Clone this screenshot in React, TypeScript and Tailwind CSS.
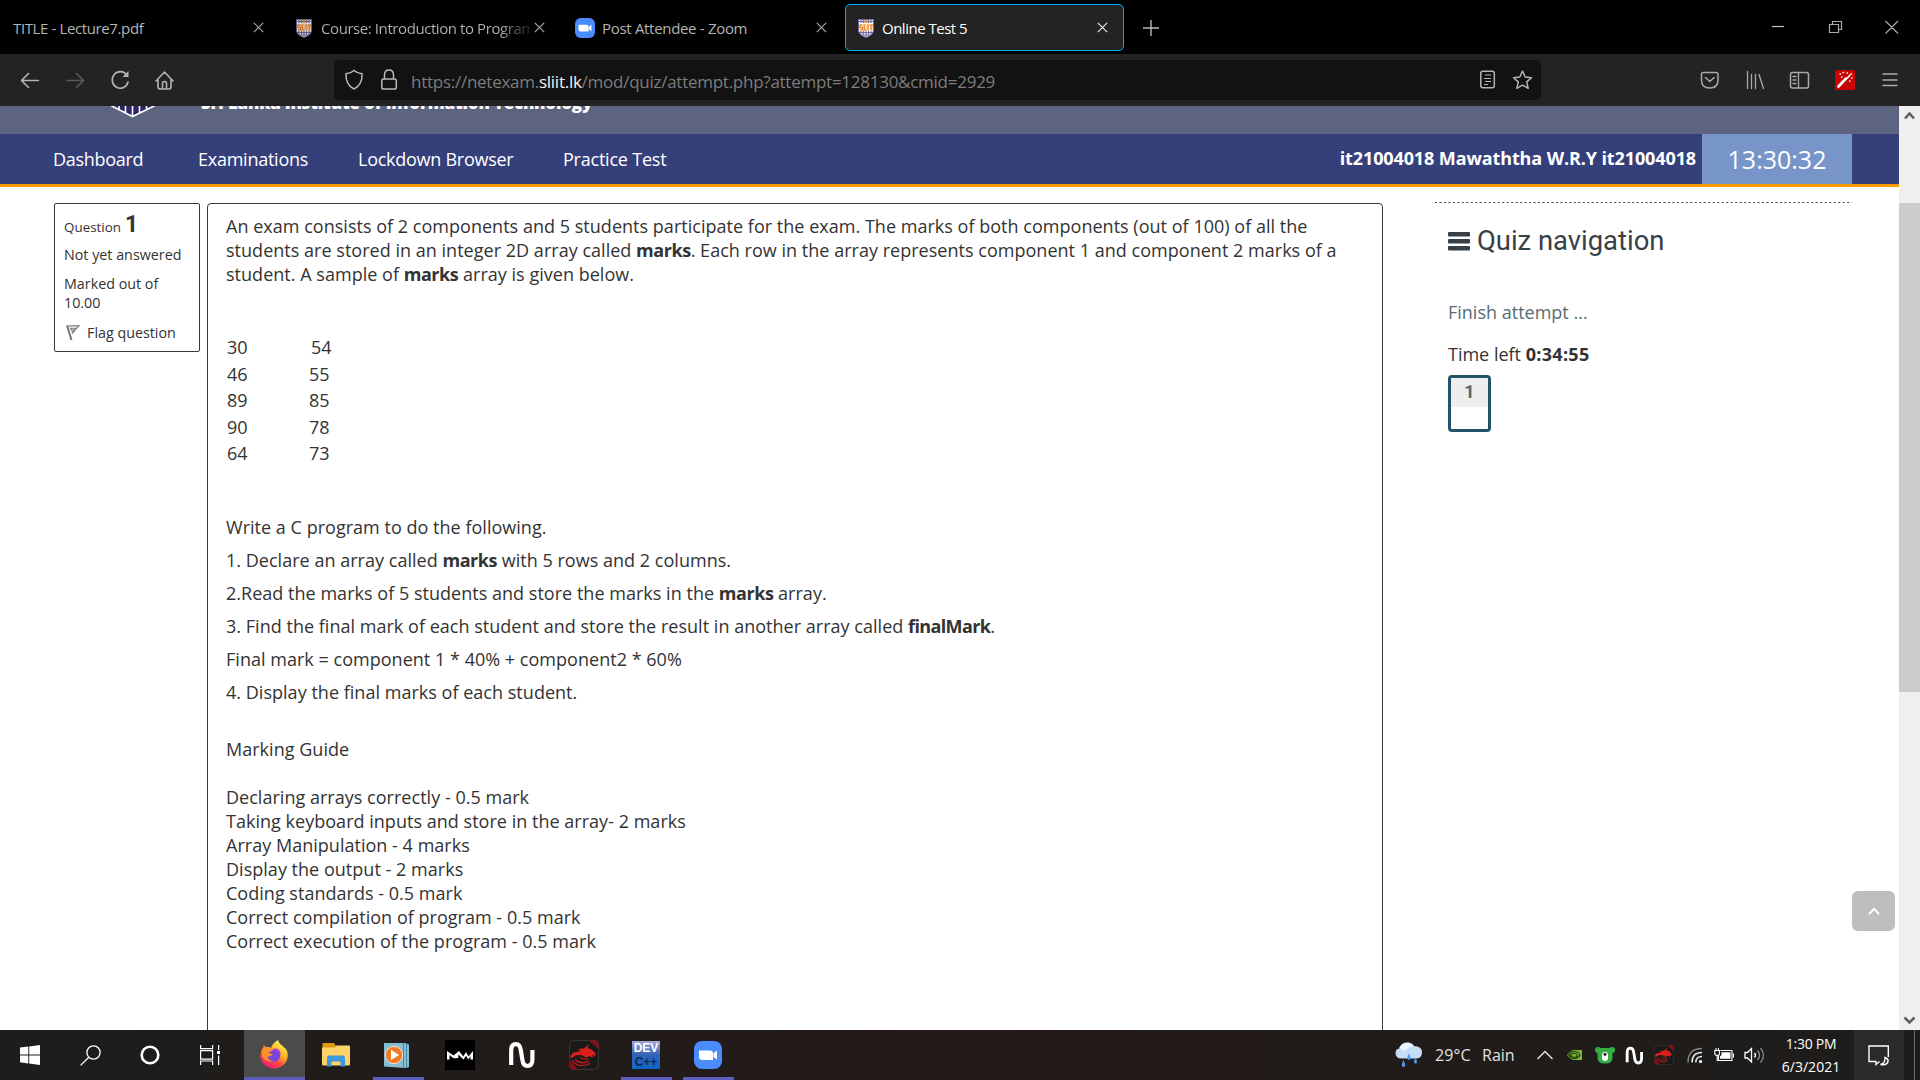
import React from "react";

type Kids = { children?: React.ReactNode };

const SliitCrest = ({ dim = false }: { dim?: boolean }) => (
  <svg width="16" height="19" viewBox="0 0 16 19" opacity={dim ? 0.85 : 1} className="mt-[2px] shrink-0">
    <path d="M.5.5h15v10.500c0 4-4 6-7.500 7.500C4.500 17 .5 15 .5 11z" fill="#fff" stroke="#6f6da0" />
    <path d="M3 1v3M5.500 1v3M10.500 1v3M13 1v3M1 2.500h14M3 12v3M5.500 12v4.500M8 12v6M10.500 12v4.500M13 12v3M1 13.500h14M3 16h10" stroke="#6f6da0" strokeWidth="1.100" />
    <rect x="6.500" y="1" width="3" height="3" fill="#f08a3c" />
    <rect x="1" y="5" width="14" height="7" fill="#fbd9b8" />
    <path d="M4.500 6H2v2.500h2.500V11H2M6.300 5.500v5.500h2M10 5.500V11M11.500 6H15M13.200 6v5" stroke="#ef8425" strokeWidth="1.200" fill="none" />
  </svg>
);

const ZoomLogo = ({ size }: { size: number }) => (
  <svg width={size} height={size} viewBox="0 0 28 28" className="shrink-0">
    <rect width="28" height="28" rx="8" fill="#4a8cfb" />
    <path d="M5 9.500h11c2 0 3 1.200 3 3v6.500H8.500C6.200 19 5 17.800 5 16z" fill="#fff" />
    <path d="M19.500 12.300 23 9.600v9l-3.500-2.700z" fill="#fff" />
  </svg>
);

const CloseX = ({ color }: { color: string }) => (
  <svg width="11" height="11" viewBox="0 0 11 11" className="shrink-0">
    <path d="M.8.8l9.400 9.400M10.200.8.8 10.200" stroke={color} strokeWidth="1.200" />
  </svg>
);

function TabBar() {
  return (
    <div className="flex h-[54px] shrink-0 bg-black text-[15px] text-[#b4b4b4]">
      <div className="flex w-[282px] items-center pl-[13px] pr-[18px]">
        <span className="flex-1 pt-[2px] tracking-[-0.38px]">TITLE - Lecture7.pdf</span>
        <CloseX color="#a8a8a8" />
      </div>
      <div className="flex w-[282px] items-center pl-[14px] pr-[19px]">
        <SliitCrest dim />
        <span className="ml-[9px] w-[209px] overflow-hidden whitespace-nowrap bg-gradient-to-r from-[#b4b4b4] from-85% to-[#222] bg-clip-text pt-[2px] tracking-[-0.42px] text-transparent">
          Course: Introduction to Programming
        </span>
        <span className="ml-auto"><CloseX color="#a8a8a8" /></span>
      </div>
      <div className="flex w-[281px] items-center pl-[11px] pr-[18px] pt-px">
        <ZoomLogo size={20} />
        <span className="ml-[7px] flex-1 pt-px tracking-[-0.31px]">Post Attendee - Zoom</span>
        <CloseX color="#a8a8a8" />
      </div>
      <div className="mt-1 flex h-[47px] w-[279px] items-center rounded-[5px] border border-[#00b0e8] bg-[#232323] pl-[12px] pr-[15px] text-white">
        <SliitCrest />
        <span className="ml-[8px] flex-1 pt-px tracking-[-0.5px]">Online Test 5</span>
        <CloseX color="#e8e8e8" />
      </div>
      <svg width="16" height="54" viewBox="0 0 16 54" className="ml-[19px]" stroke="#b8b8b8" strokeWidth="1.400">
        <path d="M0 28h16M8 20v16" />
      </svg>
      <svg width="128" height="54" viewBox="0 0 128 54" className="ml-auto mr-[21px]" fill="none" stroke="#a9a9a9" strokeWidth="1.200">
        <path d="M1 26.500h12" stroke="#c4c4c4" />
        <path d="M58.500 24.500h9v8h-9zM61.500 24v-2.500h9v8h-2.500M114.500 21l12.500 12.500M127 21l-12.500 12.500" />
      </svg>
    </div>
  );
}

function Toolbar() {
  return (
    <div className="flex h-[52px] shrink-0 items-center bg-[#232323]">
      <svg width="160" height="22" viewBox="0 0 160 22" className="ml-[18px]" fill="none" stroke="#b4b4b4" strokeWidth="1.600" strokeLinecap="round" strokeLinejoin="round">
        <path d="M10.500 4.500 3.500 11.500l7 7M3.500 11.500h17" />
        <path d="M58.500 4.500l7 7-7 7M65 11.500H49" stroke="#5a5a5a" />
        <path d="M108.700 6A8 8.300 0 1 0 110 13" />
        <path d="M110.500 2v6h-6z" fill="#b4b4b4" stroke="none" />
        <path d="M138 12l8.500-9 8.500 9M140 11v6.500q0 2.500 2 2.500h9q2 0 2-2.500V11M144.500 20v-6q0-1.500 2-1.500t2 1.500v6" />
      </svg>
      <div className="ml-[156px] flex h-[40px] w-[1207px] items-center rounded-[5px] bg-[#121212]">
        <svg width="56" height="22" viewBox="0 0 56 22" className="ml-[9px]" fill="none" stroke="#b8b8b8" strokeWidth="1.500">
          <path d="M11 1.500c2.500 2.300 5 3 8 3.200.4 7.500-2.500 12.500-8 15.300C5.500 17.200 2.600 12.200 3 4.700c3-.2 5.500-.9 8-3.200z" />
          <rect x="38.800" y="10" width="14.500" height="10" rx="1.800" />
          <path d="M41.500 10V6q0-5 4.500-5t4.500 5v4" />
        </svg>
        <span className="ml-[12px] pt-1 text-[17px] tracking-[-0.26px] text-[#7d7d7d]">
          https://netexam.<span className="text-[#f2f2f2]">sliit.lk</span>/mod/quiz/attempt.php?attempt=128130&amp;cmid=2929
        </span>
        <svg width="56" height="22" viewBox="0 0 56 22" className="ml-auto mr-[7px]" fill="none" stroke="#b4b4b4" strokeWidth="1.500" strokeLinejoin="round">
          <rect x="2.800" y="2.300" width="13.500" height="16.500" rx="2" />
          <path d="M7 6h6M6 9.500h7M7 12.500h6M6 15.500h4" strokeWidth="1.200" />
          <path d="M44.500 2l2.700 6 6.300.7-4.800 4.200 1.500 6.400-5.700-3.200-5.700 3.200 1.500-6.400-4.800-4.200 6.300-.7z" />
        </svg>
      </div>
      <svg width="200" height="22" viewBox="0 0 200 22" className="ml-auto mr-[21px]" fill="none" stroke="#a9a9a9" strokeWidth="1.500" strokeLinecap="round" strokeLinejoin="round">
        <path d="M4.500 3.500h12.500q2 0 2 2V11q0 8-8.300 8T2.500 11V5.500q0-2 2-2zM6.500 8.500l4.300 4 4.300-4" />
        <path d="M48.500 2.500v17M52.500 5.500v14M56.500 5.500v14M60 5.500l4.500 14" strokeWidth="1.300" />
        <rect x="91.500" y="3.500" width="18" height="15.500" rx="2" />
        <path d="M99.500 3.500V19M94 7.500h3M94 11h3M94 14.500h3" strokeWidth="1.300" />
        <rect x="136" y="1" width="20" height="20" rx="1.500" fill="#c80404" stroke="none" />
        <path d="M139.500 17.500l7.500-8" stroke="#fff" strokeWidth="2.600" />
        <path d="M148 9.500l3-3.500M141 5h.5M144 3.500h.5M148 4h.5M152 5h.5M152.500 9h.5M150.500 12h.5M142.500 8h.5" stroke="#fff" strokeWidth="1.400" />
        <path d="M184 5h14M184 11h14M184 16.500h14" />
      </svg>
    </div>
  );
}

function SiteHeader() {
  return (
    <>
      <div className="flex h-7 shrink-0 items-start overflow-hidden bg-[#5d6480]">
        <svg width="44" height="12" viewBox="0 0 44 12" className="ml-[111px]">
          <path d="M0 0h44L21.500 11z" fill="#2c2568" />
          <path d="M0-.5 21.500 10.500 44-.5M8-1v4.500M14.500-1v7.500M21.500-1v11M28.500-1v7.500M35.500-1v4.500" fill="none" stroke="#fff" strokeWidth="1.600" />
        </svg>
        <span className="-mt-[15px] ml-[46px] whitespace-nowrap text-[17px] font-extrabold leading-6 tracking-[-0.21px] text-white">
          Sri Lanka Institute of Information Technology
        </span>
      </div>
      <div className="flex h-[53px] shrink-0 items-center border-b-[3px] border-[#ff9c00] bg-[#35407b] text-[18px] text-white">
        <span className="ml-[53px] w-[145px] tracking-[-0.3px]">Dashboard</span>
        <span className="w-[160px] tracking-[-0.25px]">Examinations</span>
        <span className="w-[205px] tracking-[-0.26px]">Lockdown Browser</span>
        <span className="tracking-[-0.22px]">Practice Test</span>
        <span className="-mt-[2px] ml-auto font-bold tracking-[-0.11px]">it21004018 Mawaththa W.R.Y it21004018</span>
        <div className="ml-[6px] mr-[47px] flex h-[50px] w-[150px] items-center justify-center bg-[#7895ca] pt-px text-[25px]">13:30:32</div>
      </div>
    </>
  );
}

const rows: [string, string][] = [["30", "54"], ["46", "55"], ["89", "85"], ["90", "78"], ["64", "73"]];

const guide = [
  "Declaring arrays correctly - 0.5 mark",
  "Taking keyboard inputs and store in the array- 2 marks",
  "Array Manipulation - 4 marks",
  "Display the output - 2 marks",
  "Coding standards - 0.5 mark",
  "Correct compilation of program - 0.5 mark",
  "Correct execution of the program - 0.5 mark",
];

function QuestionInfo() {
  return (
    <div className="mt-4 h-[149px] w-[146px] shrink-0 rounded-[2px] border border-[#343a40] pl-[9px] text-[14.3px] leading-[19px] text-[#333]">
      <div className="mt-2 flex h-[25px] items-baseline gap-[4px]">
        <span className="text-[13.4px]">Question</span>
        <span className="font-['Roboto'] text-[23px] font-bold leading-[26px]">1</span>
      </div>
      <div className="mt-[8px]">Not yet answered</div>
      <div className="mt-[10px]">Marked out of<br />10.00</div>
      <div className="mt-[11px] flex items-center">
        <svg width="16" height="17" viewBox="0 0 16 17" fill="none" className="mr-[7px]">
          <path d="M3 1.500l4.500 14.500" stroke="#777" strokeWidth="2" />
          <path d="M3.500 2l11.500-.3-7 8M6.500 4.500h5l-3 3z" stroke="#8c8c8c" strokeWidth="1.300" />
        </svg>
        <span>Flag question</span>
      </div>
    </div>
  );
}

const B = ({ children }: Kids) => <b className="tracking-[-0.45px]">{children}</b>;
const P = ({ children }: Kids) => <p className="mb-[9px]">{children}</p>;

function QuestionBody() {
  return (
    <div className="ml-[7px] mt-4 h-[840px] w-[1176px] shrink-0 rounded-t-[4px] border border-[#343a40] pl-[18px] pt-[10px] text-[18px] leading-6 tracking-[0.023px] text-[#333]">
      <p>
        An exam consists of 2 components and 5 students participate for the exam. The marks of both components (out of 100) of all the
        <br />
        students are stored in an integer 2D array called <B>marks</B>. Each row in the array represents component 1 and component 2 marks of a
        <br />
        student. A sample of <B>marks</B> array is given below.
      </p>
      <div className="mb-[48px] ml-px mt-[48px] leading-[26.5px]">
        {rows.map(([a, b], i) => (
          <div key={a} className="flex">
            <span className="w-[82px]">{a}</span>
            <span className={i === 0 ? "ml-[2px]" : ""}>{b}</span>
          </div>
        ))}
      </div>
      <P>Write a C program to do the following.</P>
      <P>1. Declare an array called <B>marks</B> with 5 rows and 2 columns.</P>
      <P>2.Read the marks of 5 students and store the marks in the <B>marks</B> array.</P>
      <P>3. Find the final mark of each student and store the result in another array called <b className="tracking-[-0.62px]">finalMark</b>.</P>
      <P>Final mark = component 1 * 40% + component2 * 60%</P>
      <P>4. Display the final marks of each student.</P>
      <p className="mb-6 mt-[33px]">Marking Guide</p>
      {guide.map((g) => <p key={g}>{g}</p>)}
    </div>
  );
}

function QuizNav() {
  return (
    <div className="ml-[52px] mt-[15px] flex w-[417px] shrink-0 flex-col pl-[13px] text-[18px] leading-6">
      <svg width="417" height="2" viewBox="0 0 417 2" className="-ml-[13px]">
        <path d="M0 .5h417" stroke="#444" strokeWidth="1" strokeDasharray="2 2.480" />
      </svg>
      <div className="mt-[19px] flex h-9 items-center">
        <svg width="22" height="19" viewBox="0 0 22 19" fill="#373f47">
          <rect width="22" height="4.500" rx="1" /><rect y="7" width="22" height="4.500" rx="1" /><rect y="14" width="22" height="4.500" rx="1" />
        </svg>
        <span className="ml-[7px] font-['Roboto'] text-[27.4px] text-[#373f47]">Quiz navigation</span>
      </div>
      <a className="mt-[41px] text-[#596b74]">Finish attempt ...</a>
      <div className="mt-[18px] text-[#333]">Time left <b className="tracking-[0.3px]">0:34:55</b></div>
      <div className="mt-[9px] flex h-[57px] w-[43px] flex-col overflow-hidden rounded-[4px] border-[3px] border-[#22536b] bg-white">
        <div className="h-[29px] bg-[#eee] text-center font-['Roboto'] text-[18px] font-bold leading-[28px] text-[#54666e]">1</div>
      </div>
    </div>
  );
}

function Scrollbar() {
  return (
    <div className="flex w-[21px] shrink-0 flex-col bg-[#efefef]">
      <svg width="21" height="97" viewBox="0 0 21 97"><path d="M6 12.500l4.500-5 4.500 5" stroke="#606060" strokeWidth="2.600" fill="none" /></svg>
      <div className="h-[489px] bg-[#cccccc]" />
      <svg width="21" height="28" viewBox="0 0 21 28" className="mt-auto"><path d="M5.500 15.500l5 5 5-5" stroke="#606060" strokeWidth="2.600" fill="none" /></svg>
    </div>
  );
}

const NLogo = ({ size }: { size: number }) => (
  <svg width={size} height={size} viewBox="0 0 28 28">
    <path d="M3.200 24V9.500Q3.200 3.200 8 3.200q4 0 4.800 6l1.600 9.600q.8 6.200 5 6.200 5 0 5-6.500V9" fill="none" stroke="#fff" strokeWidth="4.200" />
  </svg>
);

const Dragon = ({ size }: { size: number }) => (
  <svg width={size} height={size} viewBox="0 0 30 30">
    <rect x=".6" y=".6" width="28.800" height="28.800" rx="4" fill="#1b1a1a" stroke="#3b3838" />
    <path d="M20 .6h6q3.400 0 3.400 3.400v5zM.6 20v6q0 3.400 3.400 3.400h5z" fill="#8a0f14" />
    <path d="M1 16.500 4.500 12.500 12 11 8.500 9 15 8.500 20 4 18.500 8 22.500 9.500 26.500 13 26 16 22.500 14.500 25 17.500 20.500 16.200 17 17.500 12.500 15 7 15.200 3 18z" fill="#dd201d" />
    <path d="M3 20c3 6 11 7 18 3.500M6 19.500c4 4 9 4 14 1.500M11 17.500c3 1.500 5 2 8 1.500" fill="none" stroke="#c91a1a" strokeWidth="1.300" />
  </svg>
);

const Firefox = () => (
  <svg width="28" height="29" viewBox="0 0 28 29">
    <defs>
      <linearGradient id="ffBody" x1=".8" y1=".1" x2=".25" y2="1">
        <stop offset="0" stopColor="#fff04a" /><stop offset=".35" stopColor="#ffb22a" /><stop offset=".65" stopColor="#ff4a3a" /><stop offset="1" stopColor="#ee1487" />
      </linearGradient>
    </defs>
    <path d="M18 0c1 4 4 5 6 7.500 2 1 4 4 3.700 8.500C27.500 23.500 21 28.500 14 28.500S.3 23 .3 15.500C.3 12 2 9 3.500 7.500V5l2.500 2.300c1.500-.5 3.500 0 5 .7 1-3 3-6 7-8z" fill="url(#ffBody)" />
    <circle cx="14" cy="15.500" r="6.300" fill="#7a45dd" />
    <path d="M14 8.200c5 0 7 3 6.500 7-2-3.500-4-4-6-4z" fill="#b03be0" />
    <path d="M2 9l3.500-1.500c3 0 5 1 8 1.200-1 2.500-4 2.500-4.500 4.300 1 1.300 3 .6 4 1-1.500 2.500-5 1.500-5.500 3.500.5 2 3 3.500 6 3.300C7 23 3 19 2 15z" fill="#ff9226" />
  </svg>
);

const TaskSlot = ({ children, running = false }: Kids & { running?: boolean }) => (
  <div className="relative flex h-[50px] w-[62px] items-center justify-center">
    {children}
    {running && <div className="absolute bottom-0 left-[6px] h-[3px] w-[51px] bg-[#5d5cc0]" />}
  </div>
);

const SysSlot = ({ children }: Kids) => <div className="flex h-[50px] w-[60px] items-center justify-center">{children}</div>;

function Taskbar() {
  return (
    <div className="flex h-[50px] shrink-0 bg-[#1d1d1b] bg-gradient-to-r from-[#1d1d1b] via-[#241a18] to-[#1d1d1b] text-white">
      <SysSlot>
        <svg width="20" height="20" viewBox="0 0 20 20" fill="#fff"><path d="M0 2.500l8.300-1v8H0zM9.200 1.400 20 0v9.500H9.200zM0 10.500h8.300v8L0 17.300zM9.200 10.500H20V20l-10.800-1.400z" /></svg>
      </SysSlot>
      <SysSlot>
        <svg width="21" height="21" viewBox="0 0 21 21" fill="none" stroke="#fff" strokeWidth="1.300"><circle cx="13.500" cy="7.500" r="6.600" /><path d="M8.800 12.200.6 20.400" /></svg>
      </SysSlot>
      <SysSlot>
        <svg width="20" height="20" viewBox="0 0 20 20"><circle cx="10" cy="10" r="8.300" fill="none" stroke="#fff" strokeWidth="2.600" /></svg>
      </SysSlot>
      <SysSlot>
        <svg width="21" height="20" viewBox="0 0 21 20" fill="none" stroke="#fff" strokeWidth="1.200">
          <path d="M.6 0v3.600h12V0M.6 5.600h12v8.500H.6zM.6 20v-4h12v4M18.600 0v5M18.600 10.500V20" /><rect x="17" y="6" width="3" height="3" fill="#fff" stroke="none" />
        </svg>
      </SysSlot>
      <div className="ml-[4px] flex h-[50px] w-[61px] items-center justify-center border-b-[3px] border-[#5d5cc0] bg-[#4b4b49] pr-px pt-px"><Firefox /></div>
      <TaskSlot>
        <svg width="28" height="24" viewBox="0 0 28 24"><path d="M.5 4V1q0-1 1-1H12l1.500 2.500V6H.5z" fill="#dc9a10" /><path d="M0 4.500h12.500L14 2.500h13q1 0 1 1V21q0 1.500-1 1.500H1Q0 22.500 0 21z" fill="#fdd368" /><path d="M5 23.500V15q0-2.500 2.500-2.500h13Q23 12.500 23 15v8.500h-4.500v-5h-9v5z" fill="#3c98dc" /></svg>
      </TaskSlot>
      <TaskSlot running>
        <svg width="25" height="25" viewBox="0 0 25 25" className="-ml-[4px]"><path d="M0 0h21l4 1.500V24l-4 1L0 23.500z" fill="#86bdd3" /><path d="M19.500 0v25M22.500 1v23.500" stroke="#4a8da8" /><circle cx="10" cy="12" r="8.600" fill="#f17a22" stroke="#fbe3cd" strokeWidth="1" /><path d="M7 6.800v10.400l8-5.200z" fill="#fff" /></svg>
      </TaskSlot>
      <TaskSlot>
        <svg width="30" height="30" viewBox="0 0 30 30"><rect width="30" height="30" fill="#000" /><path d="M2 19.500V11l6.500 4.500L14 11l4.300 5.500L21 12l2.500 4.500L28 11v8.500h-2.500v-3.200L23.300 19.500 21 15.800 18.500 19.500 13.300 14.500v3.500L8.500 18.200 4.500 15v4.500z" fill="#fff" /></svg>
      </TaskSlot>
      <TaskSlot><NLogo size={28} /></TaskSlot>
      <TaskSlot><Dragon size={30} /></TaskSlot>
      <TaskSlot running>
        <div className="flex h-7 w-7 flex-col bg-gradient-to-b from-[#a9a6da] via-[#2f62b4] to-[#0a66c8] text-center font-['Liberation_Sans'] text-[12px] font-bold leading-[14px]">
          <span className="text-white">DEV</span>
          <span className="text-[#062a55]">C++</span>
        </div>
      </TaskSlot>
      <TaskSlot running><ZoomLogo size={28} /></TaskSlot>

      <div className="ml-auto flex items-center">
        <svg width="28" height="26" viewBox="0 0 28 26" className="mr-[12px]">
          <path d="M7 16.500q-6.500 0-6.500-5.500 0-4 4.500-4.700Q7 .5 12.500.5q5 0 6.500 3.500 8 0 8 6.500 0 6-6.500 6z" fill="#c3def5" />
          <path d="M4 6q3-6 9-5.200 4 .3 5 4-6 0-8 5-4-3-6-3.800z" fill="#eaf5fd" />
          <path d="M14 11.500q-3.500 6.500 0 6.500t0-6.500zM8.500 18q-3.500 7 0 7t0-7zM20.500 15.500q-3 6 0 6t0-6z" fill="#4a9bef" />
        </svg>
        <span className="w-[47px] text-[16px] tracking-[0.1px] text-[#e2e2e2]">29°C</span>
        <span className="w-[55px] text-[16px] text-[#e2e2e2]">Rain</span>
        <svg width="16" height="10" viewBox="0 0 16 10" fill="none" stroke="#e8e8e8" strokeWidth="1.400"><path d="M.5 9 8 1.500 15.500 9" /></svg>
        <svg width="16" height="11" viewBox="0 0 16 11" className="ml-[14px]"><path d="M5 0h10v10H5z" fill="#76b62c" /><path d="M.5 5Q4 1 8 1.500t5 4Q9 9.500 5.500 8.500T.5 5zM3 5q2.500-2 5-1.500T10 6 6 7 5 5" fill="none" stroke="#2b4713" strokeWidth="1.200" /><path d="M.5 5Q3 2 5 1.600M.5 5Q3 8.500 5 8.600M3 5l2-1.300" stroke="#6ea62c" fill="none" /></svg>
        <svg width="20" height="17" viewBox="0 0 20 17" className="ml-[12px]"><circle cx="3" cy="3" r="3" fill="#35ad45" /><circle cx="17" cy="3" r="3" fill="#35ad45" /><path d="M2.500 1h15V11q0 5.500-7.500 5.500T2.500 11z" fill="#35ad45" /><rect x="7" y="5" width="6" height="9" rx="3" fill="#fff" /><circle cx="10" cy="7.300" r="1.600" fill="#222" /></svg>
        <span className="ml-[10px]"><NLogo size={19} /></span>
        <span className="ml-[10px]"><Dragon size={20} /></span>
        <svg width="16" height="17" viewBox="0 0 16 17" className="ml-[13px]" fill="none" strokeWidth="1.400">
          <path d="M1 15.500Q1 1.500 15 1.500" stroke="#8a8a8a" /><path d="M5 15.500Q5 5.500 15 5.500M8.800 15.500Q9 9.500 15 9.500" stroke="#eee" /><circle cx="13.500" cy="14.500" r="1.600" fill="#fff" />
        </svg>
        <svg width="21" height="15" viewBox="0 0 21 15" className="ml-[11px]" fill="none" stroke="#fff" strokeWidth="1.100">
          <path d="M6.500 2.500h11.500v10H4.500V8M19.500 5.500v4M.8 2.500h4.700v3q0 2-2.300 2T.8 5.500zM2 0v2.500M4.400 0v2.500M3.200 7.500v5h1.500" /><path d="M7.500 4.300h9v6.500H6V8.500q1.500-1 1.500-2.500z" fill="#fff" stroke="none" />
        </svg>
        <svg width="21" height="19" viewBox="0 0 21 19" className="ml-[9px]" fill="none" strokeWidth="1.300">
          <path d="M1 6.500h2.500L7.500 2.500v13.500l-4-4H1z" stroke="#fff" /><path d="M10.500 7q2 2.300 0 4.500" stroke="#fff" /><path d="M13.500 4.500q4 4.700 0 9.500M16.500 2q6 7.200 0 14.500" stroke="#8a8a8a" />
        </svg>
        <div className="ml-[15px] flex w-[62px] flex-col items-center text-[14px] leading-[23px]">
          <span className="tracking-[-0.25px]">1:30 PM</span>
          <span>6/3/2021</span>
        </div>
        <div className="ml-[12px] flex h-[50px] w-[50px] items-center justify-center bg-[#2a2a2a]">
          <svg width="22" height="21" viewBox="0 0 22 21" fill="none" stroke="#fff" strokeWidth="1.400"><path d="M11.500 16.500 8 19.500v-3H1V1h19.300v11" /><path d="M17 12.500q3.500 1 3 4-1 4-7.500 3 5-1.500 4.500-7z" /></svg>
        </div>
        <div className="ml-[10px] mr-[5px] h-[50px] w-px bg-[#6a6a6a]" />
      </div>
    </div>
  );
}

export default function App() {
  return (
    <div className="relative flex h-[1080px] w-[1920px] flex-col overflow-hidden bg-white font-['Open_Sans','Noto_Sans',sans-serif]">
      <TabBar />
      <Toolbar />
      <div className="flex h-[924px] shrink-0">
        <div className="flex w-[1899px] flex-col overflow-hidden">
          <SiteHeader />
          <main className="flex flex-1 items-start overflow-hidden pl-[54px]">
            <QuestionInfo />
            <QuestionBody />
            <QuizNav />
          </main>
        </div>
        <Scrollbar />
      </div>
      <Taskbar />
      <button className="absolute left-[1852px] top-[891px] flex h-10 w-[43px] items-center justify-center rounded-[6px] bg-[#bebebe]">
        <svg width="12" height="8" viewBox="0 0 12 8" fill="none" stroke="#fff" strokeWidth="2"><path d="M1 7l5-5 5 5" /></svg>
      </button>
    </div>
  );
}
